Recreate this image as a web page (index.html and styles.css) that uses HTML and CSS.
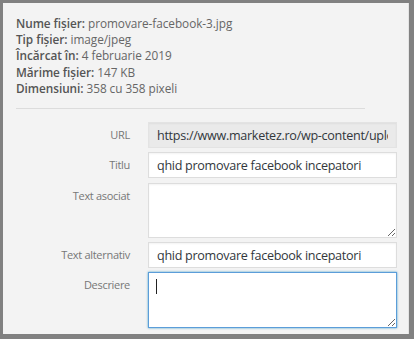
FILE: index.html
```html
<!DOCTYPE html>
<html lang="ro">
<head>
<meta charset="utf-8">
<link rel="stylesheet" href="styles.css">
</head>
<body>
<div class="frame">
  <div class="panel">
    <div class="details">
      <div><strong>Nume fișier:</strong> promovare-facebook-3.jpg</div>
      <div><strong>Tip fișier:</strong> image/jpeg</div>
      <div><strong>Încărcat în:</strong> 4 februarie 2019</div>
      <div><strong>Mărime fișier:</strong> 147 KB</div>
      <div><strong>Dimensiuni:</strong> 358 cu 358 pixeli</div>
    </div>
    <hr class="sep">
    <div class="settings">
      <label class="row r-url">
        <span class="name">URL</span>
        <input class="field readonly" type="text" value="https://www.marketez.ro/wp-content/uploads/2019/02/promovare-facebook-3.jpg" readonly>
      </label>
      <label class="row r-title">
        <span class="name">Titlu</span>
        <input class="field" type="text" value="qhid promovare facebook incepatori">
      </label>
      <label class="row r-caption">
        <span class="name">Text asociat</span>
        <textarea class="field area"></textarea>
      </label>
      <label class="row r-alt">
        <span class="name">Text alternativ</span>
        <input class="field" type="text" value="qhid promovare facebook incepatori">
      </label>
      <label class="row r-desc">
        <span class="name">Descriere</span>
        <span class="wrap">
          <textarea class="field area focus"></textarea>
          <span class="caret"></span>
        </span>
      </label>
    </div>
  </div>
</div>
</body>
</html>
```
FILE: styles.css
```css
html, body {
  margin: 0;
  padding: 0;
  background: #818181;
}
.frame {
  width: 414px;
  height: 339px;
  box-sizing: border-box;
  padding: 3px 5px 5px 3px;
  background: #818181;
}
.panel {
  height: 100%;
  background: #f3f3f3;
  border-right: 1px solid #e4e4e4;
  box-sizing: border-box;
  padding: 12px 0 0 13px;
  font-family: "Open Sans", "Noto Sans", sans-serif;
}
.details {
  font-size: 11.8px;
  line-height: 16.2px;
  color: #666;
  letter-spacing: -0.05px;
}
.details strong {
  font-weight: 600;
  color: #555;
}
.sep {
  border: 0;
  border-top: 1px solid #dcdcdc;
  margin: 12px 0 0 0;
  width: 349px;
  height: 0;
}
.settings {
  padding-top: 13px;
}
.row {
  display: flex;
  align-items: flex-start;
  margin-bottom: 4px;
}
.r-title { margin-bottom: 5px; }
.r-caption { margin-bottom: 4px; }
.name {
  width: 114px;
  text-align: right;
  flex: none;
  font-size: 11px;
  line-height: 16px;
  color: #777;
  padding-top: 5px;
  margin-right: 18px;
  letter-spacing: -0.3px;
}
.field {
  width: 249px;
  height: 26px;
  box-sizing: border-box;
  margin: 0;
  border: 1px solid #ddd;
  background: #fff;
  color: #32373c;
  font-family: "Open Sans", "Noto Sans", sans-serif;
  font-size: 12.6px;
  letter-spacing: -0.3px;
  padding: 0 8px;
  outline: none;
  border-radius: 0;
  box-shadow: inset 0 1px 2px rgba(0,0,0,0.05);
}
.readonly {
  background: #eaeaea;
  border-color: #e3e3e3;
}
.area {
  display: block;
  height: 55px;
  resize: both;
  padding: 4px 8px;
}
.r-desc .area { height: 56px; }
.focus {
  border-color: #5b9dd9;
  box-shadow: 0 0 2px rgba(30,140,190,0.8);
}
.wrap {
  position: relative;
  display: block;
}
.caret {
  position: absolute;
  left: 8px;
  top: 7px;
  width: 1px;
  height: 15px;
  background: #222;
}
```
